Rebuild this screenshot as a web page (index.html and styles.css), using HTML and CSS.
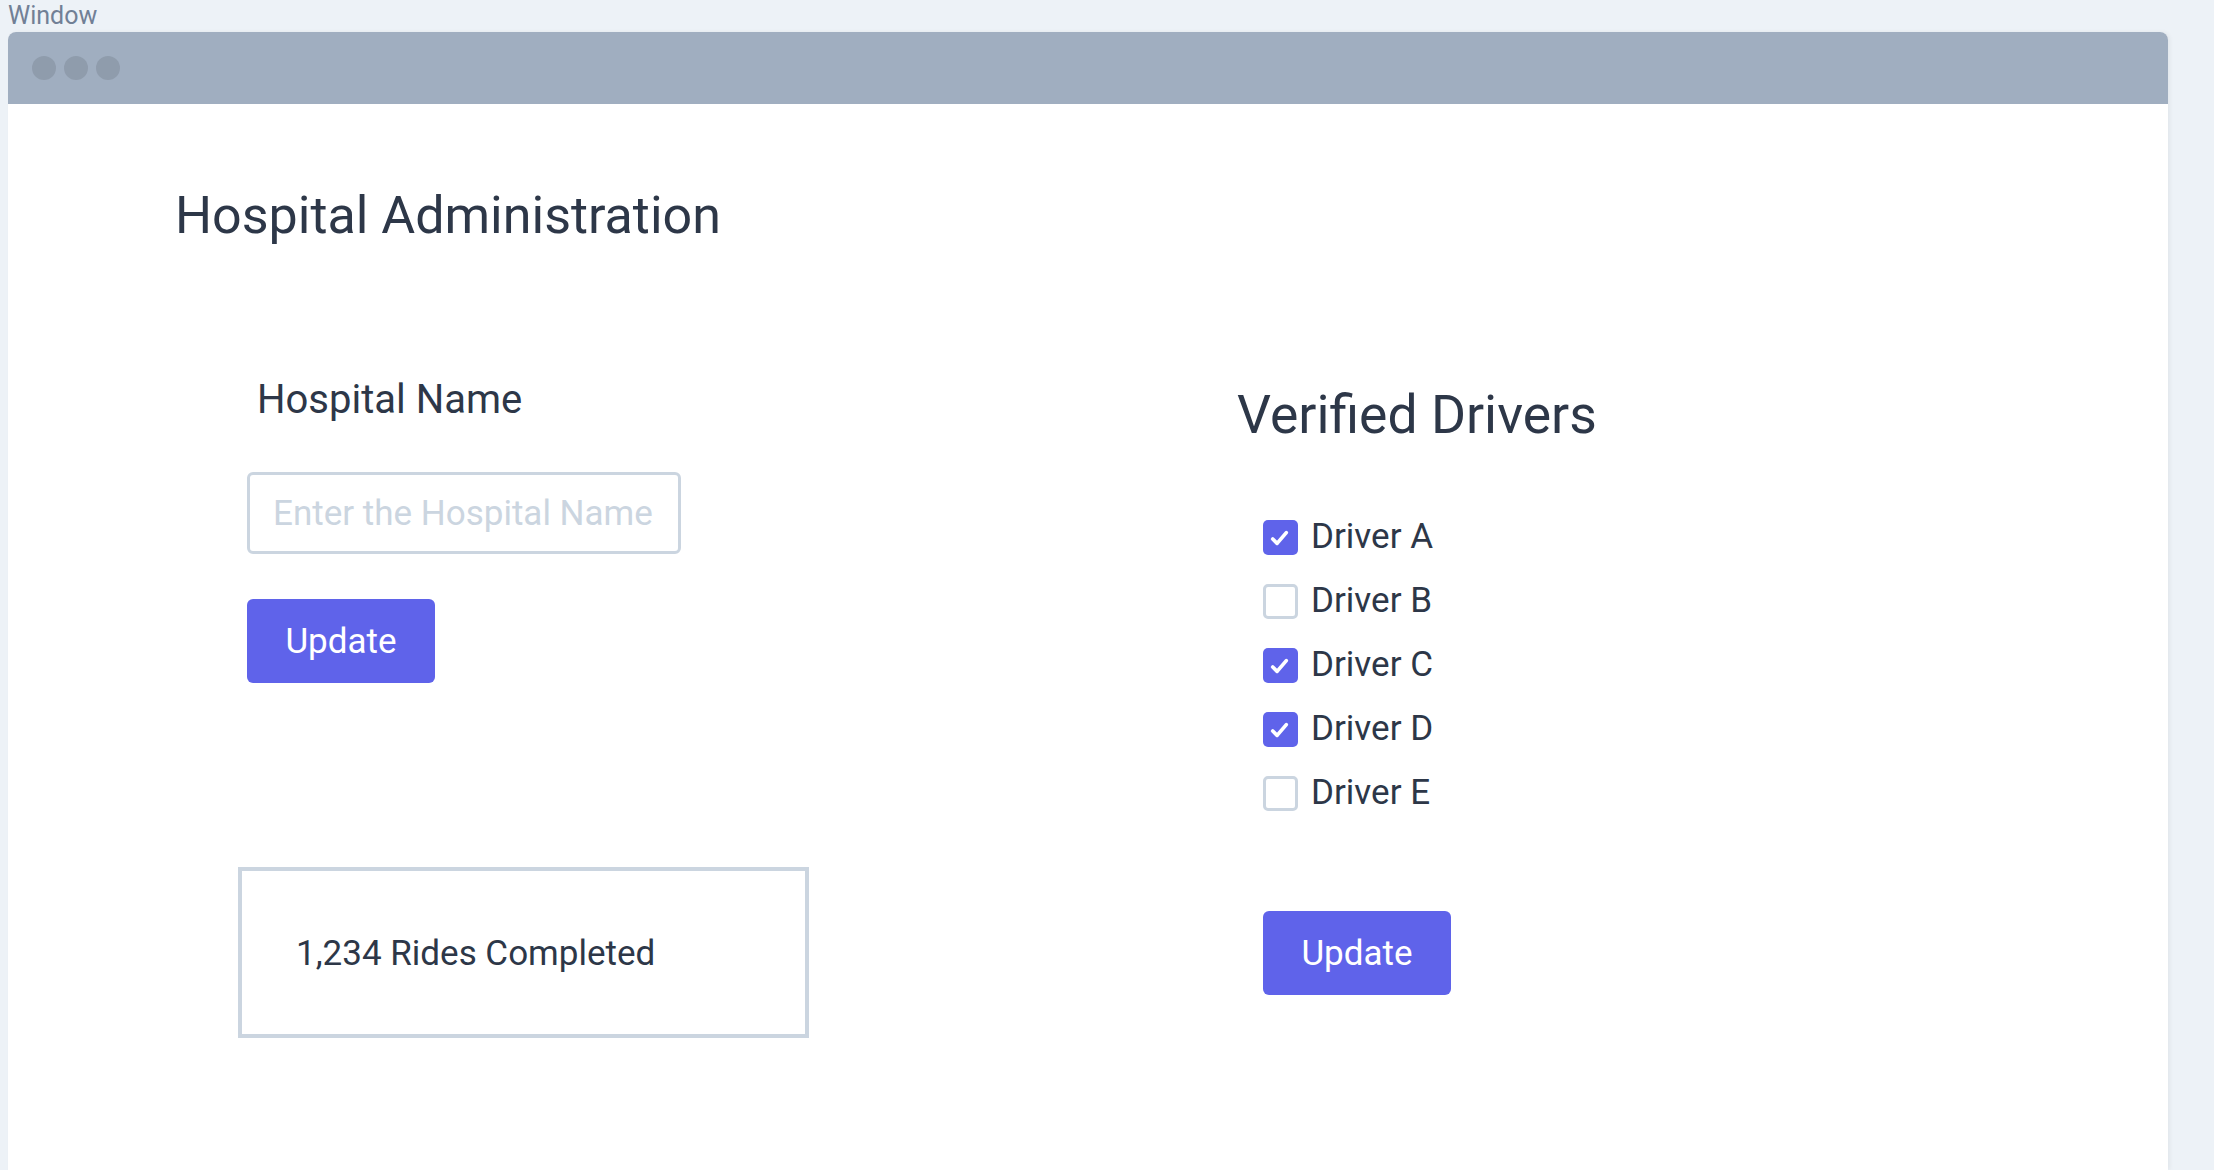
FILE: index.html
```html
<!DOCTYPE html>
<html>
<head>
<meta charset="utf-8">
<title>Hospital Administration</title>
<link rel="stylesheet" href="styles.css">
</head>
<body>
<div class="window-label">Window</div>
<div class="window">
  <div class="titlebar">
    <span class="dot"></span><span class="dot"></span><span class="dot"></span>
  </div>
  <div class="window-body">
    <h1 class="page-title">Hospital Administration</h1>
    <div class="columns">
      <div class="col-left">
        <div class="name-form">
          <label class="field-label" for="hname">Hospital Name</label>
          <input id="hname" class="text-input" type="text" placeholder="Enter the Hospital Name">
          <button class="btn">Update</button>
        </div>
        <div class="stat-box">1,234 Rides Completed</div>
      </div>
      <div class="col-right">
        <h2 class="section-title">Verified Drivers</h2>
        <ul class="driver-list">
          <li class="driver"><span class="check checked"><svg viewBox="0 0 36 36" width="36" height="36"><path d="M10 19.5 L14.5 24 L24 13" fill="none" stroke="#fff" stroke-width="3.8" stroke-linecap="round" stroke-linejoin="round"/></svg></span><span class="driver-name">Driver A</span></li>
          <li class="driver"><span class="check"></span><span class="driver-name">Driver B</span></li>
          <li class="driver"><span class="check checked"><svg viewBox="0 0 36 36" width="36" height="36"><path d="M10 19.5 L14.5 24 L24 13" fill="none" stroke="#fff" stroke-width="3.8" stroke-linecap="round" stroke-linejoin="round"/></svg></span><span class="driver-name">Driver C</span></li>
          <li class="driver"><span class="check checked"><svg viewBox="0 0 36 36" width="36" height="36"><path d="M10 19.5 L14.5 24 L24 13" fill="none" stroke="#fff" stroke-width="3.8" stroke-linecap="round" stroke-linejoin="round"/></svg></span><span class="driver-name">Driver D</span></li>
          <li class="driver"><span class="check"></span><span class="driver-name">Driver E</span></li>
        </ul>
        <button class="btn btn-drivers">Update</button>
      </div>
    </div>
  </div>
</div>
</body>
</html>
```
FILE: styles.css
```css
html, body {
  margin: 0;
  padding: 0;
  height: 100%;
  overflow: hidden;
}
body {
  background: #edf2f7;
  font-family: Roboto, "Liberation Sans", sans-serif;
  color: #2d3748;
}
.window-label {
  height: 32px;
  line-height: 32px;
  padding-left: 8px;
  font-size: 25px;
  color: #718096;
}
.window {
  margin-left: 8px;
  width: 2160px;
  height: calc(100vh - 32px);
  background: #fff;
  border-radius: 8px 8px 0 0;
  box-shadow: 2px 0 4px rgba(0, 0, 0, 0.05);
  display: flex;
  flex-direction: column;
}
.titlebar {
  height: 72px;
  background: #a0aec0;
  border-radius: 8px 8px 0 0;
  display: flex;
  align-items: center;
  gap: 8px;
  padding-left: 24px;
}
.dot {
  width: 24px;
  height: 24px;
  border-radius: 50%;
  background: #8f9cac;
}
.window-body {
  padding: 82px 0 0 167px;
}
.page-title {
  margin: 0;
  font-size: 52px;
  line-height: 60px;
  font-weight: 400;
  color: #2d3748;
}
.columns {
  display: flex;
  align-items: flex-start;
  margin-top: 131px;
}
.col-left {
  margin-left: 63px;
  width: 999px;
  display: flex;
  flex-direction: column;
  align-items: flex-start;
}
.name-form {
  margin-left: 9px;
  display: flex;
  flex-direction: column;
  align-items: flex-start;
}
.field-label {
  display: block;
  padding-left: 10px;
  font-size: 40px;
  line-height: 46px;
}
.text-input {
  margin-top: 49px;
  box-sizing: border-box;
  width: 434px;
  height: 82px;
  border: 3px solid #cbd5e0;
  border-radius: 6px;
  padding: 0 0 0 23px;
  font-family: Roboto, "Liberation Sans", sans-serif;
  font-size: 35px;
  color: #2d3748;
  outline: none;
}
.text-input::placeholder {
  color: #cbd5e0;
  opacity: 1;
}
.btn {
  margin-top: 45px;
  width: 188px;
  height: 84px;
  border: none;
  border-radius: 6px;
  background: #5f63ea;
  color: #fff;
  font-family: Roboto, "Liberation Sans", sans-serif;
  font-size: 35px;
  cursor: pointer;
}
.stat-box {
  margin-top: 184px;
  box-sizing: border-box;
  width: 571px;
  height: 171px;
  border: 4px solid #cbd5e0;
  padding-left: 54px;
  padding-top: 2px;
  display: flex;
  align-items: center;
  font-size: 35px;
}
.col-right {
  padding-top: 8px;
  display: flex;
  flex-direction: column;
  align-items: flex-start;
}
.section-title {
  margin: 0;
  font-size: 53.5px;
  line-height: 60px;
  font-weight: 400;
}
.driver-list {
  list-style: none;
  margin: 74px 0 0 26px;
  padding: 0;
  display: flex;
  flex-direction: column;
  gap: 28px;
}
.driver {
  display: flex;
  align-items: center;
  gap: 13px;
  height: 36px;
}
.check {
  box-sizing: border-box;
  width: 35px;
  height: 35px;
  border: 3px solid #cbd5e0;
  border-radius: 5px;
  background: #fff;
  display: block;
}
.check.checked {
  border: none;
  background: #5f63ea;
}
.check svg {
  display: block;
  width: 35px;
  height: 35px;
}
.driver-name {
  font-size: 35px;
  line-height: 36px;
}
.btn-drivers {
  margin-top: 100px;
  margin-left: 26px;
}
```
